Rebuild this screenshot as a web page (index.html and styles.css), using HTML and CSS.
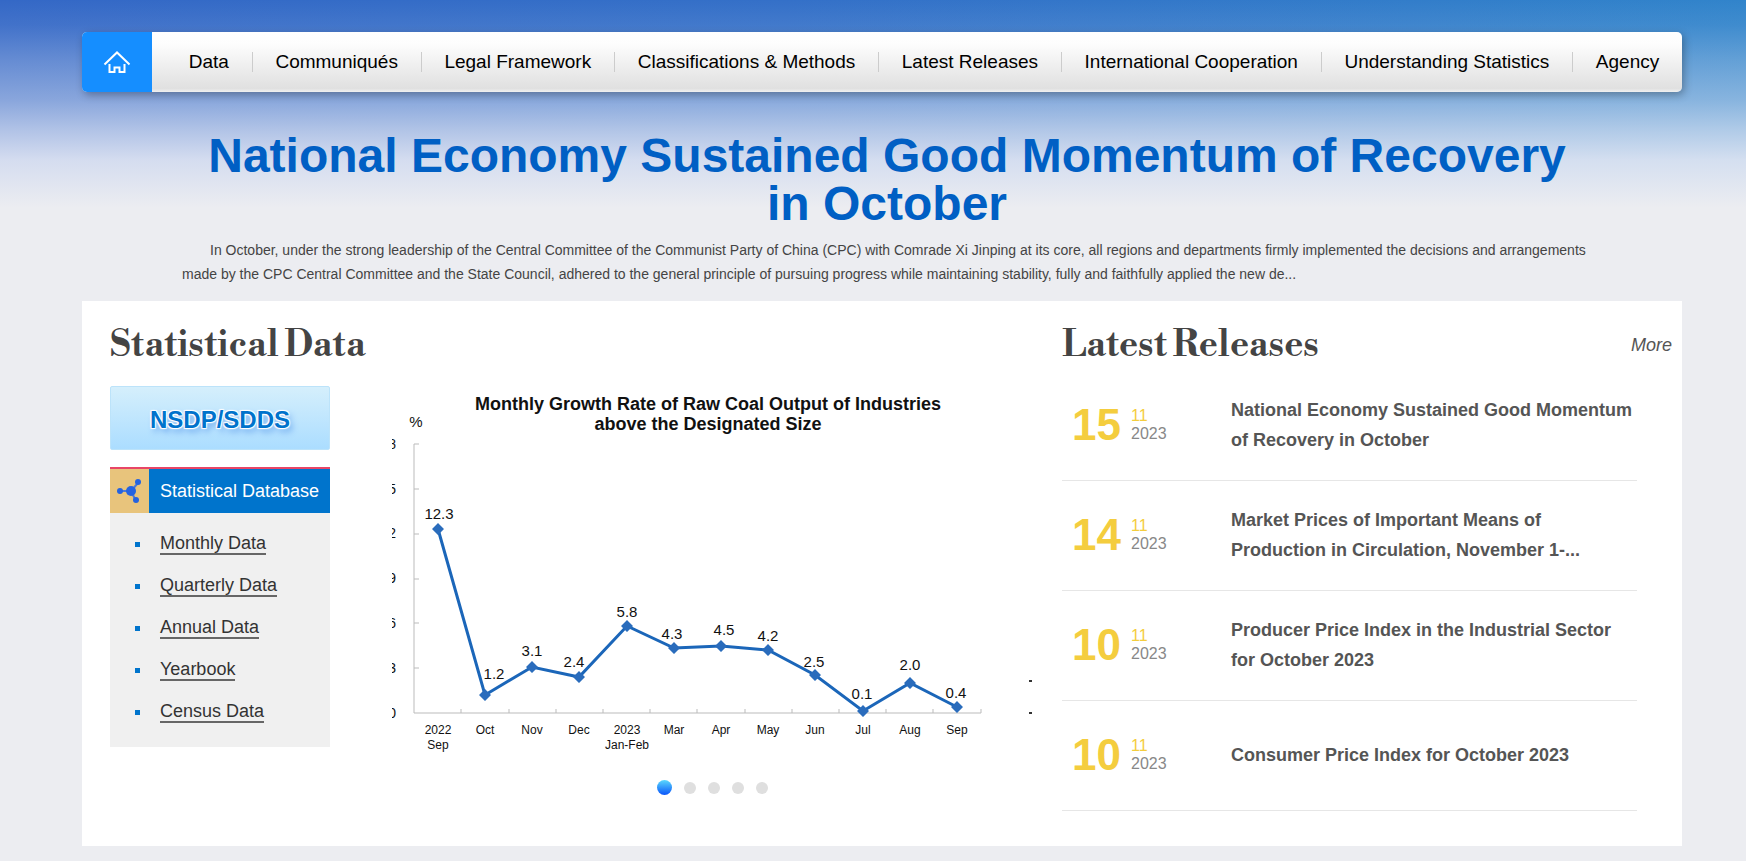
FILE: index.html
```html
<!DOCTYPE html>
<html lang="en">
<head>
    <meta charset="UTF-8">
    <title>National Bureau of Statistics of China</title>
    <link rel="stylesheet" href="styles.css">
</head>
<body>
<div class="wrap">
    <nav class="nav">
        <a class="home" href="#" aria-label="Home">
            <svg width="28" height="24" viewBox="0 0 28 24" fill="none" stroke="#fff" stroke-width="2">
                <path d="M1.5 14.5 L14 2.5 L26.5 14.5"/>
                <path d="M6.5 14 V22 H11.5 V17.5 H16.5 V22 H21.5 V14"/>
            </svg>
        </a>
        <ul class="menu">
            <li><a href="#">Data</a></li>
            <li><a href="#">Communiqués</a></li>
            <li><a href="#">Legal Framework</a></li>
            <li><a href="#">Classifications &amp; Methods</a></li>
            <li><a href="#">Latest Releases</a></li>
            <li><a href="#">International Cooperation</a></li>
            <li><a href="#">Understanding Statistics</a></li>
            <li><a href="#">Agency</a></li>
        </ul>
    </nav>

    <header class="headline">
        <h1><a href="#">National Economy Sustained Good Momentum of Recovery in October</a></h1>
        <p>In October, under the strong leadership of the Central Committee of the Communist Party of China (CPC) with Comrade Xi Jinping at its core, all regions and departments firmly implemented the decisions and arrangements made by the CPC Central Committee and the State Council, adhered to the general principle of pursuing progress while maintaining stability, fully and faithfully applied the new de...</p>
    </header>

    <main class="content">
        <section class="stats">
            <h2>Statistical Data</h2>
            <div class="stats-body">
                <div class="side">
                    <a class="nsdp" href="#">NSDP/SDDS</a>
                    <div class="database">
                        <h3>
                            <span class="db-icon">
                                <svg width="26" height="26" viewBox="0 0 26 26" fill="#2563e0" stroke="#4b78d8" stroke-width="2">
                                    <path d="M4 13 H14 L21 5 M14 13 L19 23" fill="none"/>
                                    <circle cx="14" cy="13" r="5" stroke="none"/>
                                    <circle cx="3" cy="13" r="3" stroke="none"/>
                                    <circle cx="21" cy="4" r="3" stroke="none"/>
                                    <circle cx="19" cy="22" r="3" stroke="none"/>
                                </svg>
                            </span>
                            <a href="#">Statistical Database</a>
                        </h3>
                        <ul>
                            <li><a href="#">Monthly Data</a></li>
                            <li><a href="#">Quarterly Data</a></li>
                            <li><a href="#">Annual Data</a></li>
                            <li><a href="#">Yearbook</a></li>
                            <li><a href="#">Census Data</a></li>
                        </ul>
                    </div>
                </div>
                <div class="slider">
                    <svg class="chart" viewBox="0 0 640 374" role="img" aria-label="Monthly Growth Rate of Raw Coal Output">
                        <g class="chart-title">
                            <text x="316" y="24">Monthly Growth Rate of Raw Coal Output of Industries</text>
                            <text x="316" y="44">above the Designated Size</text>
                        </g>
                        <g class="chart-unit">
                            <text x="24" y="41">%</text>
                        </g>
                        <g class="chart-scale">
                            <text x="4" y="63">18</text>
                            <text x="4" y="108">15</text>
                            <text x="4" y="152">12</text>
                            <text x="4" y="197">9</text>
                            <text x="4" y="242">6</text>
                            <text x="4" y="287">3</text>
                            <text x="4" y="332">0</text>
                        </g>
                        <path class="axis" d="M22 58 V327 H589 M22 58 H27 M22 103 H27 M22 148 H27 M22 193 H27 M22 237 H27 M22 282 H27 M69 327 V323 M117 327 V323 M164 327 V323 M211 327 V323 M258 327 V323 M305 327 V323 M353 327 V323 M400 327 V323 M447 327 V323 M494 327 V323 M541 327 V323 M589 327 V323"/>
                        <polyline class="line" points="46,143 93,309 140,281 187,291 235,240 282,262 329,260 376,264 423,289 471,325 518,297 565,321"/>
                        <path class="mark" d="M46 137l6 6-6 6-6-6z M93 303l6 6-6 6-6-6z M140 275l6 6-6 6-6-6z M187 285l6 6-6 6-6-6z M235 234l6 6-6 6-6-6z M282 256l6 6-6 6-6-6z M329 254l6 6-6 6-6-6z M376 258l6 6-6 6-6-6z M423 283l6 6-6 6-6-6z M471 319l6 6-6 6-6-6z M518 291l6 6-6 6-6-6z M565 315l6 6-6 6-6-6z"/>
                        <g class="chart-value">
                            <text x="47" y="133">12.3</text>
                            <text x="102" y="293">1.2</text>
                            <text x="140" y="270">3.1</text>
                            <text x="182" y="281">2.4</text>
                            <text x="235" y="231">5.8</text>
                            <text x="280" y="253">4.3</text>
                            <text x="332" y="249">4.5</text>
                            <text x="376" y="255">4.2</text>
                            <text x="422" y="281">2.5</text>
                            <text x="470" y="313">0.1</text>
                            <text x="518" y="284">2.0</text>
                            <text x="564" y="312">0.4</text>
                        </g>
                        <g class="chart-month">
                            <text x="46" y="348">2022</text>
                            <text x="46" y="363">Sep</text>
                            <text x="93" y="348">Oct</text>
                            <text x="140" y="348">Nov</text>
                            <text x="187" y="348">Dec</text>
                            <text x="235" y="348">2023</text>
                            <text x="235" y="363">Jan-Feb</text>
                            <text x="282" y="348">Mar</text>
                            <text x="329" y="348">Apr</text>
                            <text x="376" y="348">May</text>
                            <text x="423" y="348">Jun</text>
                            <text x="471" y="348">Jul</text>
                            <text x="518" y="348">Aug</text>
                            <text x="565" y="348">Sep</text>
                        </g>
                        <!-- left edge of the next slide -->
                        <path class="next" d="M637 295 H640 M637 327 H640"/>
                    </svg>
                    <div class="dots">
                        <button class="on" type="button" aria-label="Slide 1"></button>
                        <button type="button" aria-label="Slide 2"></button>
                        <button type="button" aria-label="Slide 3"></button>
                        <button type="button" aria-label="Slide 4"></button>
                        <button type="button" aria-label="Slide 5"></button>
                    </div>
                </div>
            </div>
        </section>

        <section class="releases">
            <div class="releases-head">
                <h2>Latest Releases</h2>
                <a class="more" href="#">More</a>
            </div>
            <ul>
                <li>
                    <span class="day">15</span>
                    <span class="date"><b>11</b>2023</span>
                    <a href="#">National Economy Sustained Good Momentum of Recovery in October</a>
                </li>
                <li>
                    <span class="day">14</span>
                    <span class="date"><b>11</b>2023</span>
                    <a href="#">Market Prices of Important Means of Production in Circulation, November 1-...</a>
                </li>
                <li>
                    <span class="day">10</span>
                    <span class="date"><b>11</b>2023</span>
                    <a href="#">Producer Price Index in the Industrial Sector for October 2023</a>
                </li>
                <li>
                    <span class="day">10</span>
                    <span class="date"><b>11</b>2023</span>
                    <a href="#">Consumer Price Index for October 2023</a>
                </li>
            </ul>
        </section>
    </main>
</div>
</body>
</html>
```
FILE: styles.css
```css
* {
    box-sizing: border-box;
    margin: 0;
    padding: 0;
}

body {
    font-family: Arial, "Liberation Sans", sans-serif;
    font-size: 18px;
    color: #333;
    background: linear-gradient(to bottom, rgba(230, 233, 244, 0) 0, rgba(230, 233, 244, 0.08) 25px, rgba(230, 233, 244, 0.28) 60px, rgba(230, 233, 244, 0.48) 100px, rgba(230, 233, 244, 0.7) 130px, rgba(230, 233, 244, 0.9) 160px, #ecedf1 208px), linear-gradient(to right, #3468c6, #3470c8 45%, #3184cb);
}

a {
    color: inherit;
    text-decoration: none;
}

ul {
    list-style: none;
}

.wrap {
    padding: 32px 64px 15px 82px;
}

.nav {
    display: flex;
    height: 60px;
    border-radius: 5px;
    background: linear-gradient(to bottom, #fff 0, #fdfdfd 20%, #e0e0e0 94%, #f0f0f0);
    box-shadow: 2px 3px 8px rgba(0, 0, 0, 0.3);
}

.home {
    display: flex;
    align-items: center;
    justify-content: center;
    width: 70px;
    border-radius: 5px 0 0 5px;
    background-color: #158eff;
}

.menu {
    display: flex;
    flex: 1;
    align-items: center;
    justify-content: space-between;
    padding-left: 14px;
    font-size: 19px;
}

.menu li {
    flex: auto;
    text-align: center;
    line-height: 20px;
    color: #000;
    border-left: 1px solid #ccc;
}

.menu li:first-child {
    border-left: none;
}

.headline {
    padding: 40px 84px 15px 100px;
}

.headline h1 {
    padding: 0 26px 0 20px;
    font-size: 48px;
    line-height: 48px;
    text-align: center;
    color: #005fc4;
}

.headline p {
    margin-top: 10px;
    font-size: 14px;
    line-height: 24px;
    text-indent: 28px;
    color: #444;
}

.content {
    display: flex;
    padding: 30px 10px 35px 28px;
    background-color: #fff;
}

h2 {
    font-family: "Libre Bodoni", "Liberation Serif", serif;
    font-size: 36px;
    line-height: 30px;
    color: #444;
}

.stats {
    flex: 1;
}

.stats-body {
    display: flex;
    gap: 62px;
    margin-top: 25px;
}

.side {
    width: 220px;
}

.nsdp {
    display: block;
    height: 64px;
    line-height: 66px;
    text-align: center;
    font-size: 24px;
    font-weight: bold;
    color: #0073cc;
    border: 1px solid #bce3fa;
    border-radius: 2px;
    background: linear-gradient(to bottom, #d5effc, #abddff);
    text-shadow: 1px 1px 1px #fff, -1px -1px 1px #fff, 1px -1px 1px #fff, -1px 1px 1px #fff, 3px 4px 6px #6aa5ee;
}

.database {
    margin-top: 17px;
    border-top: 2px solid #e84566;
    background-color: #f0f0f0;
}

.database h3 {
    display: flex;
    line-height: 44px;
    font-size: 18px;
    font-weight: normal;
    color: #fff;
    background-color: #0074cc;
}

.db-icon {
    display: flex;
    align-items: center;
    justify-content: center;
    width: 39px;
    margin-right: 11px;
    background-color: #e8c47c;
}

.database ul {
    padding: 10px 0 14px 25px;
}

.database li {
    display: flex;
    align-items: center;
    height: 42px;
}

.database li::before {
    content: "";
    width: 5px;
    height: 5px;
    margin-right: 20px;
    background-color: #0074cc;
}

.database li a {
    line-height: 20px;
    border-bottom: 2px solid #666;
}

.slider {
    flex: 1;
}

.chart {
    display: block;
    width: 100%;
    font-family: Arial, "Liberation Sans", sans-serif;
    fill: #111;
    text-anchor: middle;
}

.chart-title {
    font-size: 18px;
    font-weight: bold;
}

.chart-unit,
.chart-value {
    font-size: 15px;
}

.chart-scale {
    font-size: 14px;
    text-anchor: end;
}

.chart-month {
    font-size: 12px;
}

.axis {
    fill: none;
    stroke: #bbb;
}

.line {
    fill: none;
    stroke: #1b66b9;
    stroke-width: 3;
}

.mark {
    fill: #2a6cbc;
}

.next {
    stroke: #333;
    stroke-width: 2;
}

.dots {
    display: flex;
    align-items: center;
    justify-content: center;
    gap: 12px;
    margin-top: 20px;
}

.dots button {
    width: 12px;
    height: 12px;
    border: none;
    border-radius: 50%;
    background-color: #dfdfdf;
    cursor: pointer;
}

.dots .on {
    width: 15px;
    height: 15px;
    background: linear-gradient(to bottom, #5ad8fd, #0a55fa);
}

.releases {
    width: 610px;
    margin-left: 30px;
}

.releases-head {
    display: flex;
    justify-content: space-between;
    line-height: 30px;
}

.more {
    font-style: italic;
    line-height: 28px;
    color: #555;
}

.releases ul {
    margin: 10px 35px 0 0;
}

.releases li {
    display: flex;
    align-items: center;
    height: 110px;
    padding: 0 0 2px 10px;
    border-bottom: 1px solid #e6e6e6;
}

.day {
    width: 59px;
    font-size: 44px;
    font-weight: bold;
    color: #f4cd3e;
}

.date {
    width: 100px;
    font-size: 16px;
    line-height: 18px;
    color: #888;
}

.date b {
    display: block;
    font-weight: normal;
    color: #f4cd3e;
}

.releases li a {
    flex: 1;
    line-height: 30px;
    font-weight: bold;
    color: #555;
}
```
